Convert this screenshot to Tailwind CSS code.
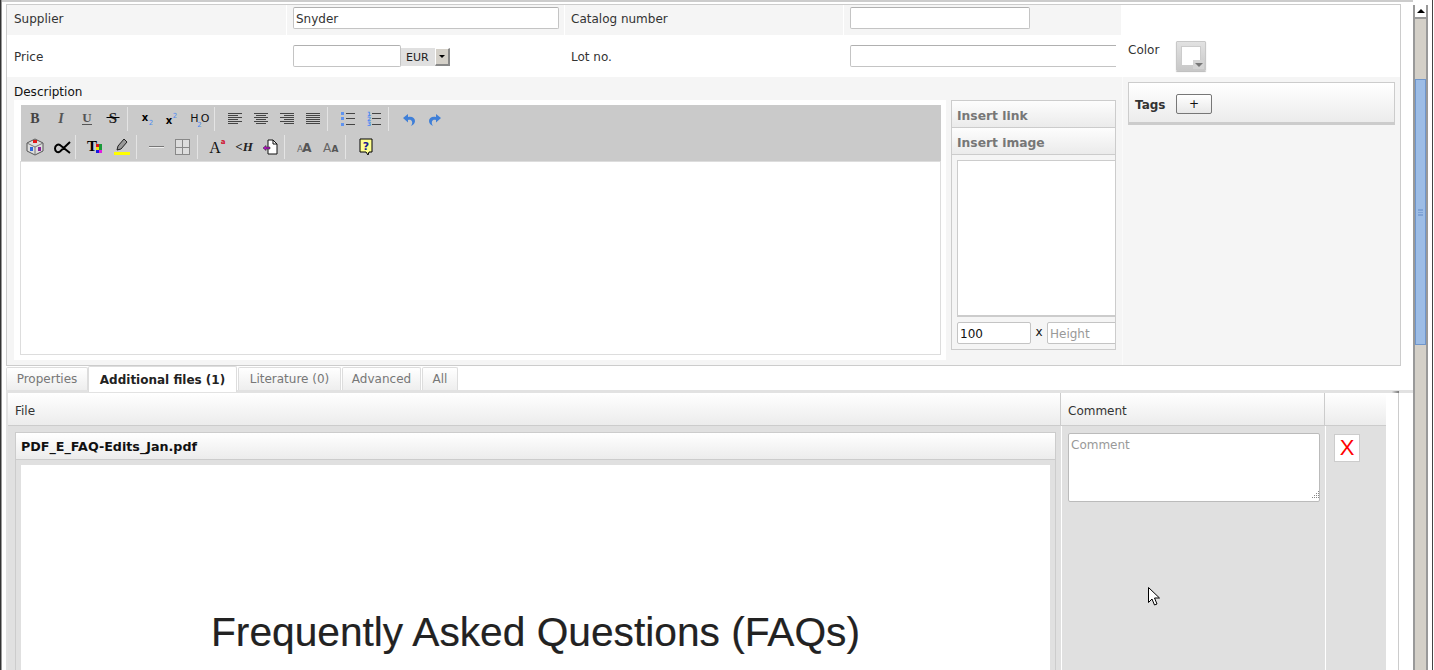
<!DOCTYPE html>
<html lang="en">
<head>
    <meta charset="UTF-8">
    <title>Edit item</title>
    <script src="https://cdn.jsdelivr.net/npm/@tailwindcss/browser@4"></script>
</head>
<body class="bg-white">
<div class="relative flex h-[670px] w-[1434px] overflow-hidden bg-white font-['DejaVu_Sans',sans-serif] text-[12px] leading-[16px] text-[#333]">

    <!-- left window edge -->
    <div class="h-full w-[2px] shrink-0 border-l border-[#333] bg-[#999]"></div>

    <!-- page -->
    <div class="w-[1411px] shrink-0 border-t-2 border-[#ccc] pt-[2px]">

        <!-- top panel -->
        <div class="ml-[4px] h-[362px] w-[1395px] border border-[#ccc]">
            <div class="flex h-[72px]">
                <div class="w-[1114px]">
                    <div class="grid h-[30px] grid-cols-[279px_277px_278px_277px] gap-x-px">
                        <div class="flex items-center bg-[#f5f5f5] pb-[2px] pl-[7px]">Supplier</div>
                        <div class="bg-[#f5f5f5] pl-[6px] pt-[2px]">
                            <input type="text" value="Snyder" class="h-[22px] w-[266px] rounded-[2px] border border-[#c4c4c4] border-t-[#b0b0b0] bg-white px-[2px] pt-[2px] text-[#333] outline-none">
                        </div>
                        <div class="flex items-center bg-[#f5f5f5] pb-[2px] pl-[6px]">Catalog number</div>
                        <div class="bg-[#f5f5f5] pl-[6px] pt-[2px]">
                            <input type="text" class="h-[22px] w-[180px] rounded-[2px] border border-[#c4c4c4] border-t-[#b0b0b0] bg-white outline-none">
                        </div>
                    </div>
                    <div class="grid h-[42px] grid-cols-[279px_277px_278px_277px] gap-x-px">
                        <div class="flex items-center pl-[7px] pt-[2px]">Price</div>
                        <div class="flex pl-[6px] pt-[10px]">
                            <input type="text" class="h-[22px] w-[108px] rounded-[2px] border border-[#c4c4c4] border-t-[#b0b0b0] bg-white outline-none">
                            <div class="mt-[3px] flex h-[18px] w-[49px] items-center justify-between bg-[#e0e0e0] pl-[5px] text-[11px] text-[#222]">
                                <span class="pt-px">EUR</span>
                                <span class="flex h-[18px] w-[15px] items-center justify-center border-b-2 border-r-2 border-[#888] border-l border-l-white border-t border-t-white bg-[#d4d0c8]">
                                    <span class="h-0 w-0 border-x-[3px] border-t-[3px] border-x-transparent border-t-black"></span>
                                </span>
                            </div>
                        </div>
                        <div class="flex items-center pl-[6px] pt-[2px]">Lot no.</div>
                        <div class="pl-[6px] pt-[10px]">
                            <div class="w-[266px] overflow-hidden">
                                <input type="text" class="block h-[22px] w-[290px] rounded-[2px] border border-[#c4c4c4] border-t-[#b0b0b0] bg-white outline-none">
                            </div>
                        </div>
                    </div>
                </div>
                <div class="ml-px flex w-[278px] pl-[6px] pt-[36px]">
                    <span class="mt-px w-[48px]">Color</span>
                    <span class="relative block h-[30px] w-[30px] rounded-[1px] border border-[#c8c8c8] bg-gradient-to-b from-[#e2e2e2] to-[#c8c8c8] p-[4px] shadow-[0_1px_1px_#bbb]">
                        <span class="block h-[20px] w-[20px] border border-[#ccc] bg-white"></span>
                        <span class="absolute bottom-[1px] right-[1px] flex h-[9px] w-[11px] items-center justify-center bg-[#d4d4d4]">
                            <span class="h-0 w-0 border-x-[4px] border-t-[4px] border-x-transparent border-t-[#777]"></span>
                        </span>
                    </span>
                </div>
            </div>

            <div class="flex h-[288px] bg-[#f5f5f5]">
                <div class="w-[1114px] pl-[7px] pt-[7px]">
                    <div class="h-[16px] text-[#111]">Description</div>
                    <div class="flex gap-[5px]">
                        <!-- editor -->
                        <div class="h-[260px] w-[932px] bg-white pl-[6px] pr-[5px] pt-[5px]">
                            <div class="ml-px h-[56px] bg-[#cacaca] pl-[1px]">
                                <div class="flex h-[28px] items-center">
                                    <span class="flex h-[28px] w-[26px] items-center justify-center"><svg width="20" height="20" viewBox="0 0 20 20"><text x="10" y="14" text-anchor="middle" font-family="Liberation Serif" font-weight="bold" font-size="14" fill="#444">B</text></svg></span>
                                    <span class="flex h-[28px] w-[26px] items-center justify-center"><svg width="20" height="20" viewBox="0 0 20 20"><text x="10" y="14" text-anchor="middle" font-family="Liberation Serif" font-weight="bold" font-style="italic" font-size="14" fill="#555">I</text></svg></span>
                                    <span class="flex h-[28px] w-[26px] items-center justify-center"><svg width="20" height="20" viewBox="0 0 20 20"><text x="10" y="13" text-anchor="middle" font-family="Liberation Serif" font-weight="bold" font-size="13" fill="#555">U</text><path d="M5 15.500h10" stroke="#555"/></svg></span>
                                    <span class="flex h-[28px] w-[26px] items-center justify-center"><svg width="20" height="20" viewBox="0 0 20 20"><text x="10" y="14" text-anchor="middle" font-family="Liberation Serif" font-weight="bold" font-size="15" fill="#222">S</text><path d="M3.500 8.500h13" stroke="#000"/></svg></span>
                                    <span class="ml-px mr-[7px] h-[24px] w-px bg-[#e4e4e4]"></span>
                                    <span class="flex h-[28px] w-[26px] items-center justify-center"><svg width="20" height="20" viewBox="0 0 20 20"><text x="7" y="12" text-anchor="middle" font-family="DejaVu Sans" font-weight="bold" font-size="10" fill="#000">x</text><text x="13" y="16" text-anchor="middle" font-family="DejaVu Sans" font-size="7" fill="#4f8bf0">2</text></svg></span>
                                    <span class="flex h-[28px] w-[26px] items-center justify-center"><svg width="20" height="20" viewBox="0 0 20 20"><text x="5" y="15" text-anchor="middle" font-family="DejaVu Sans" font-weight="bold" font-size="10" fill="#000">x</text><text x="11" y="9" text-anchor="middle" font-family="DejaVu Sans" font-size="7" fill="#4f8bf0">2</text></svg></span>
                                    <span class="flex h-[28px] w-[26px] items-center justify-center"><svg width="20" height="20" viewBox="0 0 20 20"><text x="4.500" y="13" text-anchor="middle" font-family="DejaVu Sans" font-size="11" fill="#111">H</text><text x="9.500" y="18" text-anchor="middle" font-family="DejaVu Sans" font-size="7" fill="#4f8bf0">2</text><text x="15" y="13" text-anchor="middle" font-family="DejaVu Sans" font-size="11" fill="#111">O</text></svg></span>
                                    <span class="ml-px mr-[7px] h-[24px] w-px bg-[#e4e4e4]"></span>
                                    <span class="flex h-[28px] w-[26px] items-center justify-center"><svg width="20" height="20" viewBox="0 0 20 20" stroke="#444"><path d="M3 4.500h14M3 6.500h10M3 8.500h14M3 10.500h10M3 12.500h14M3 14.500h10"/></svg></span>
                                    <span class="flex h-[28px] w-[26px] items-center justify-center"><svg width="20" height="20" viewBox="0 0 20 20" stroke="#444"><path d="M3 4.500h14M5 6.500h10M3 8.500h14M5 10.500h10M3 12.500h14M5 14.500h10"/></svg></span>
                                    <span class="flex h-[28px] w-[26px] items-center justify-center"><svg width="20" height="20" viewBox="0 0 20 20" stroke="#444"><path d="M3 4.500h14M7 6.500h10M3 8.500h14M7 10.500h10M3 12.500h14M7 14.500h10"/></svg></span>
                                    <span class="flex h-[28px] w-[26px] items-center justify-center"><svg width="20" height="20" viewBox="0 0 20 20" stroke="#444"><path d="M3 4.500h14M3 6.500h14M3 8.500h14M3 10.500h14M3 12.500h14M3 14.500h14"/></svg></span>
                                    <span class="ml-px mr-[7px] h-[24px] w-px bg-[#e4e4e4]"></span>
                                    <span class="flex h-[28px] w-[26px] items-center justify-center"><svg width="20" height="20" viewBox="0 0 20 20"><path d="M3 3h3v3H3zM3 8h3v3H3zM3 14h3v3H3z" fill="#5f93f0"/><path d="M8 4.500h9M8 9.500h9M8 15.500h9" stroke="#444"/></svg></span>
                                    <span class="flex h-[28px] w-[26px] items-center justify-center"><svg width="20" height="20" viewBox="0 0 20 20"><text x="5" y="7" text-anchor="middle" font-family="DejaVu Sans" font-weight="bold" font-size="6" fill="#4f8bf0">1</text><text x="5" y="12" text-anchor="middle" font-family="DejaVu Sans" font-weight="bold" font-size="6" fill="#4f8bf0">2</text><text x="5" y="17" text-anchor="middle" font-family="DejaVu Sans" font-weight="bold" font-size="6" fill="#4f8bf0">3</text><path d="M8 4.500h9M8 9.500h9M8 15.500h9" stroke="#444"/></svg></span>
                                    <span class="ml-px mr-[7px] h-[24px] w-px bg-[#e4e4e4]"></span>
                                    <span class="flex h-[28px] w-[26px] items-center justify-center"><svg width="20" height="20" viewBox="0 0 20 20"><path d="M4 9l5-4v3c4-1 7 1 7 4 0 2-1.500 4-4 5 1-1.500 1.500-3 1-4.500-.5-1.500-2-2-4-1.500v2.500z" fill="#3f7fd8"/></svg></span>
                                    <span class="flex h-[28px] w-[26px] items-center justify-center"><svg width="20" height="20" viewBox="0 0 20 20"><path d="M16 9l-5-4v3c-4-1-7 1-7 4 0 2 1.500 4 4 5-1-1.500-1.500-3-1-4.500.5-1.500 2-2 4-1.500v2.500z" fill="#3f7fd8"/></svg></span>
                                </div>
                                <div class="flex h-[28px] items-center">
                                    <span class="flex h-[28px] w-[26px] items-center justify-center"><svg width="20" height="20" viewBox="0 0 20 20"><path d="M2 6l8-4 8 4v8l-8 4-8-4z" fill="#ddd" stroke="#555"/><path d="M2 6l8 4 8-4M10 10v8" fill="none" stroke="#777"/><rect x="8" y="3" width="4" height="3" fill="#e01818"/><rect x="5" y="10" width="3" height="4" fill="#3366dd"/><rect x="13" y="10" width="3" height="4" fill="#882299"/></svg></span>
                                    <span class="flex h-[28px] w-[26px] items-center justify-center"><svg width="20" height="20" viewBox="0 0 20 20"><path d="M19 5L9 14.500C7 16 4 15 4 11.500 4 8 7 7 9 8l10 8" fill="none" stroke="#000" stroke-width="2"/></svg></span>
                                    <span class="ml-px mr-[7px] h-[24px] w-px bg-[#e4e4e4]"></span>
                                    <span class="flex h-[28px] w-[26px] items-center justify-center"><svg width="20" height="20" viewBox="0 0 20 20"><text x="6" y="13.500" text-anchor="middle" font-family="Liberation Serif" font-weight="bold" font-size="15" fill="#000">T</text><path d="M10 7h3v3h-3z" fill="#e01818"/><path d="M13 7h3v3h-3z" fill="#1a9a3a"/><path d="M10 10h3v3h-3z" fill="#f0e010"/><path d="M13 10h3v3h-3z" fill="#1a9a3a"/><path d="M10 13h3v3h-3z" fill="#1818e0"/><path d="M13 13h3v3h-3z" fill="#e018e0"/></svg></span>
                                    <span class="flex h-[28px] w-[26px] items-center justify-center"><svg width="20" height="20" viewBox="0 0 20 20"><path d="M2 15h16v3H2z" fill="#ffff00"/><path d="M5 13l1-4 6-7 3 3-6 7z" fill="#999" stroke="#222"/></svg></span>
                                    <span class="ml-px mr-[7px] h-[24px] w-px bg-[#e4e4e4]"></span>
                                    <span class="flex h-[28px] w-[26px] items-center justify-center"><svg width="20" height="20" viewBox="0 0 20 20"><path d="M2 9.500h15" stroke="#777"/><path d="M2 10.500h15" stroke="#eee"/></svg></span>
                                    <span class="flex h-[28px] w-[26px] items-center justify-center"><svg width="20" height="20" viewBox="0 0 20 20"><rect x="2.500" y="2.500" width="14" height="15" fill="#ddd" stroke="#888"/><path d="M9.500 2.500v15M2.500 10.500h14" stroke="#888"/></svg></span>
                                    <span class="ml-px mr-[7px] h-[24px] w-px bg-[#e4e4e4]"></span>
                                    <span class="flex h-[28px] w-[26px] items-center justify-center"><svg width="20" height="20" viewBox="0 0 20 20"><text x="7" y="16" text-anchor="middle" font-family="Liberation Serif" font-size="16" fill="#111">A</text><text x="15" y="7" text-anchor="middle" font-family="DejaVu Sans" font-weight="bold" font-size="7" fill="#d01030">a</text></svg></span>
                                    <span class="flex h-[28px] w-[26px] items-center justify-center"><svg width="20" height="20" viewBox="0 0 20 20"><text x="10" y="14" text-anchor="middle" font-family="Liberation Serif" font-weight="bold" font-style="italic" font-size="13" fill="#222">&lt;H</text></svg></span>
                                    <span class="flex h-[28px] w-[26px] items-center justify-center"><svg width="20" height="20" viewBox="0 0 20 20"><path d="M8 3h5l4 4v10H8z" fill="#fff" stroke="#111"/><path d="M13 3v4h4" fill="none" stroke="#111"/><path d="M3 11l3-2.500V10h4v2H6v1.500z" fill="#b010c0" stroke="#222" stroke-width=".5"/></svg></span>
                                    <span class="ml-px mr-[7px] h-[24px] w-px bg-[#e4e4e4]"></span>
                                    <span class="flex h-[28px] w-[26px] items-center justify-center"><svg width="20" height="20" viewBox="0 0 20 20"><text x="5" y="15" text-anchor="middle" font-family="DejaVu Sans" font-size="9" fill="#666">A</text><text x="12" y="15" text-anchor="middle" font-family="DejaVu Sans" font-weight="bold" font-size="12" fill="#555">A</text></svg></span>
                                    <span class="flex h-[28px] w-[26px] items-center justify-center"><svg width="20" height="20" viewBox="0 0 20 20"><text x="6" y="15" text-anchor="middle" font-family="DejaVu Sans" font-size="12" fill="#666">A</text><text x="14" y="15" text-anchor="middle" font-family="DejaVu Sans" font-weight="bold" font-size="9" fill="#555">A</text></svg></span>
                                    <span class="ml-px mr-[7px] h-[24px] w-px bg-[#e4e4e4]"></span>
                                    <span class="flex h-[28px] w-[26px] items-center justify-center"><svg width="20" height="20" viewBox="0 0 20 20"><path d="M4 2h12v13h-3l-1 3-2-3H4z" fill="#ffff90" stroke="#000"/><text x="10" y="13" text-anchor="middle" font-family="DejaVu Sans" font-weight="bold" font-size="11" fill="#1a1a90">?</text></svg></span>
                                </div>
                            </div>
                            <div class="h-[194px] border border-[#ddd] bg-white"></div>
                        </div>

                        <!-- insert panel -->
                        <div class="h-[250px] w-[165px] overflow-hidden border border-[#ccc]">
                            <div class="flex h-[27px] items-center border-b border-[#ccc] bg-gradient-to-b from-[#fdfdfd] to-[#ebebeb] pl-[5px] pt-[3px] text-[12.3px] font-bold text-[#777]">Insert link</div>
                            <div class="flex h-[27px] items-center border-b border-[#ccc] bg-gradient-to-b from-[#fdfdfd] to-[#ebebeb] pl-[5px] pt-[3px] text-[12.3px] font-bold text-[#777]">Insert image</div>
                            <div class="ml-[5px] mt-[5px] h-[157px] w-[170px] border border-b-2 border-[#ccc] bg-white"></div>
                            <div class="ml-[5px] mt-[5px] flex w-[170px] items-center">
                                <input type="text" value="100" class="h-[22px] w-[74px] rounded-[2px] border border-[#c4c4c4] bg-white px-[2px] pt-[2px] text-[#111] outline-none">
                                <span class="w-[16px] pb-[3px] text-center text-[#111]">x</span>
                                <input type="text" placeholder="Height" class="h-[22px] w-[80px] rounded-[2px] border border-[#c4c4c4] bg-white px-[2px] pt-[2px] outline-none placeholder:text-[#999]">
                            </div>
                        </div>
                    </div>
                </div>
                <div class="ml-px w-[278px] border-l border-[#fafafa] pl-[5px] pt-[5px]">
                    <div class="flex h-[43px] w-[267px] items-center border border-b-[3px] border-[#ccc] bg-gradient-to-b from-white to-[#ececec] pl-[6px]">
                        <span class="w-[41px] pt-[5px] font-bold">Tags</span>
                        <span class="mt-[3px] flex h-[20px] w-[36px] items-center justify-center rounded-[2px] border border-[#777] bg-gradient-to-b from-white to-[#e8e8e8] text-[#111]">+</span>
                    </div>
                </div>
            </div>
        </div>

        <!-- tabs -->
        <div class="ml-[4px] flex h-[24px] items-start text-[#777]">
            <div class="mt-px flex h-[23px] w-[82px] items-center justify-center rounded-t-[2px] border border-b-0 border-[#ddd] bg-gradient-to-b from-white to-[#eee]">Properties</div>
            <div class="relative z-10 flex h-[26px] w-[149px] items-center justify-center rounded-t-[2px] border border-b-0 border-[#ddd] bg-white font-bold text-[#222]">Additional files (1)</div>
            <div class="ml-px mt-px flex h-[23px] w-[103px] items-center justify-center rounded-t-[2px] border border-b-0 border-[#ddd] bg-gradient-to-b from-white to-[#eee]">Literature (0)</div>
            <div class="ml-px mt-px flex h-[23px] w-[79px] items-center justify-center rounded-t-[2px] border border-b-0 border-[#ddd] bg-gradient-to-b from-white to-[#eee]">Advanced</div>
            <div class="ml-px mt-px flex h-[23px] w-[36px] items-center justify-center rounded-t-[2px] border border-b-0 border-[#ddd] bg-gradient-to-b from-white to-[#eee]">All</div>
        </div>

        <!-- files table -->
        <div class="ml-[4px] border-t-[3px] border-[#e2e2e2]">
            <div class="relative flex">
                <div class="h-[277px] w-[2px] bg-[#e2e2e2]"></div>
                <div class="w-[1378px]">
                    <div class="flex h-[33px] border-b border-[#ccc] bg-gradient-to-b from-white to-[#ececec]">
                        <div class="flex w-[1053px] items-center border-r border-[#ccc] pl-[7px] pt-[3px]">File</div>
                        <div class="flex w-[264px] items-center border-r border-[#ccc] pl-[7px] pt-[3px]">Comment</div>
                    </div>
                    <div class="flex h-[244px] bg-[#e0e0e0]">
                        <div class="w-[1054px] border-r border-white pl-[7px] pt-[6px]">
                            <div class="h-[300px] w-[1041px] border border-[#ccc]">
                                <div class="flex h-[27px] items-center border-b border-[#ccc] bg-gradient-to-b from-white to-[#ececec] pl-[5px] pt-px text-[12.7px] font-bold text-[#111]">PDF_E_FAQ-Edits_Jan.pdf</div>
                                <div class="mx-[5px] mt-[5px] h-[300px] bg-white pt-[145px] text-center font-['Liberation_Sans',sans-serif] text-[40.7px] leading-[44px] text-[#222] [-webkit-text-stroke:0.2px_#222]">Frequently Asked Questions (FAQs)</div>
                            </div>
                        </div>
                        <div class="relative w-[264px] border-r border-white pl-[6px] pt-[7px]">
                            <textarea placeholder="Comment" class="h-[69px] w-[252px] resize-none rounded-[2px] border border-[#bbb] bg-white px-[2px] py-[3px] outline-none placeholder:text-[#999]"></textarea>
                            <svg class="absolute left-[247px] top-[64px]" width="11" height="11" viewBox="0 0 11 11" fill="#888"><path d="M9 1h1v1H9zM7 3h1v1H7zM9 3h1v1H9zM5 5h1v1H5zM7 5h1v1H7zM9 5h1v1H9zM3 7h1v1H3zM5 7h1v1H5zM7 7h1v1H7zM9 7h1v1H9z"/></svg>
                        </div>
                        <div class="pl-[8px] pt-[8px]">
                            <div class="flex h-[28px] w-[26px] items-center justify-center border border-[#ccc] bg-white font-['Liberation_Sans',sans-serif] text-[22px] text-[#f00]">X</div>
                        </div>
                    </div>
                </div>
                <div class="relative ml-[12px] h-[277px] w-px bg-[#ccc]">
                    <span class="absolute -top-[2px] -left-[6px] h-[2px] w-[7px] bg-gradient-to-r from-[#ddd] to-[#777]"></span>
                </div>
            </div>
        </div>
    </div>

    <!-- scrollbar -->
    <div class="mt-[5px] h-[665px] w-[15px] shrink-0 border-x-2 border-x-[#999] bg-[#d4d0c8]">
        <div class="flex h-[14px] items-center justify-center border-b-2 border-[#999] bg-white">
            <span class="h-0 w-0 border-x-[4px] border-b-[4px] border-x-transparent border-b-black"></span>
        </div>
        <div class="mt-[60px] flex h-[266px] items-center justify-center border border-[#6f96cc] bg-[#9dbde6]">
            <span class="h-[7px] w-[5px] border-y border-[#7fa3d6] bg-[linear-gradient(#7fa3d6_1px,transparent_1px)] bg-[length:100%_2px]"></span>
        </div>
    </div>

    <!-- right window edge -->
    <div class="ml-[4px] h-full w-[1px] shrink-0 bg-[#444]"></div>

    <!-- mouse cursor -->
    <svg class="absolute left-[1148px] top-[587px]" width="13" height="20" viewBox="0 0 13 20"><path d="M.5.500v15l3.500-3.500 2.500 6 2.500-1-2.500-6h5z" fill="#fff" stroke="#000"/></svg>
</div>
</body>
</html>
